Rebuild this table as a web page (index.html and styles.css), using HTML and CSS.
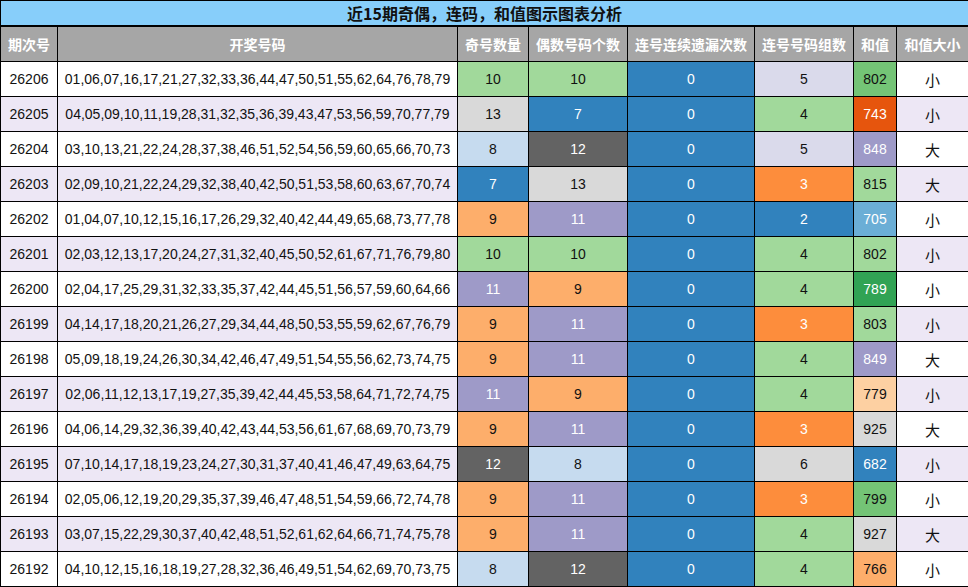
FILE: index.html
```html
<!DOCTYPE html>
<html lang="zh-CN">
<head>
<meta charset="utf-8">
<title>近15期奇偶，连码，和值图示图表分析</title>
<link rel="stylesheet" href="styles.css">
</head>
<body>
<table class="chart">
  <colgroup>
    <col class="w-period"><col class="w-nums"><col class="w-odd"><col class="w-even"><col class="w-miss"><col class="w-groups"><col class="w-sum"><col class="w-size">
  </colgroup>
  <thead>
    <tr class="title-row"><th colspan="8">近15期奇偶，连码，和值图示图表分析</th></tr>
    <tr class="head-row"><th>期次号</th><th>开奖号码</th><th>奇号数量</th><th>偶数号码个数</th><th>连号连续遗漏次数</th><th>连号号码组数</th><th>和值</th><th>和值大小</th></tr>
  </thead>
  <tbody>
    <tr><td>26206</td><td>01,06,07,16,17,21,27,32,33,36,44,47,50,51,55,62,64,76,78,79</td><td class="g3">10</td><td class="g3">10</td><td class="b1">0</td><td class="p4">5</td><td class="g2">802</td><td>小</td></tr>
    <tr class="alt"><td>26205</td><td>04,05,09,10,11,19,28,31,32,35,36,39,43,47,53,56,59,70,77,79</td><td class="k4">13</td><td class="b1">7</td><td class="b1">0</td><td class="g3">4</td><td class="o1">743</td><td>小</td></tr>
    <tr><td>26204</td><td>03,10,13,21,22,24,28,37,38,46,51,52,54,56,59,60,65,66,70,73</td><td class="b4">8</td><td class="k1">12</td><td class="b1">0</td><td class="p4">5</td><td class="p2">848</td><td>大</td></tr>
    <tr class="alt"><td>26203</td><td>02,09,10,21,22,24,29,32,38,40,42,50,51,53,58,60,63,67,70,74</td><td class="b1">7</td><td class="k4">13</td><td class="b1">0</td><td class="o2">3</td><td class="g3">815</td><td>大</td></tr>
    <tr><td>26202</td><td>01,04,07,10,12,15,16,17,26,29,32,40,42,44,49,65,68,73,77,78</td><td class="o3">9</td><td class="p2">11</td><td class="b1">0</td><td class="b1">2</td><td class="b2">705</td><td>小</td></tr>
    <tr class="alt"><td>26201</td><td>02,03,12,13,17,20,24,27,31,32,40,45,50,52,61,67,71,76,79,80</td><td class="g3">10</td><td class="g3">10</td><td class="b1">0</td><td class="g3">4</td><td class="g3">802</td><td>小</td></tr>
    <tr><td>26200</td><td>02,04,17,25,29,31,32,33,35,37,42,44,45,51,56,57,59,60,64,66</td><td class="p2">11</td><td class="o3">9</td><td class="b1">0</td><td class="g3">4</td><td class="g1">789</td><td>小</td></tr>
    <tr class="alt"><td>26199</td><td>04,14,17,18,20,21,26,27,29,34,44,48,50,53,55,59,62,67,76,79</td><td class="o3">9</td><td class="p2">11</td><td class="b1">0</td><td class="o2">3</td><td class="g3">803</td><td>小</td></tr>
    <tr><td>26198</td><td>05,09,18,19,24,26,30,34,42,46,47,49,51,54,55,56,62,73,74,75</td><td class="o3">9</td><td class="p2">11</td><td class="b1">0</td><td class="g3">4</td><td class="p2">849</td><td>大</td></tr>
    <tr class="alt"><td>26197</td><td>02,06,11,12,13,17,19,27,35,39,42,44,45,53,58,64,71,72,74,75</td><td class="p2">11</td><td class="o3">9</td><td class="b1">0</td><td class="g3">4</td><td class="o4">779</td><td>小</td></tr>
    <tr><td>26196</td><td>04,06,14,29,32,36,39,40,42,43,44,53,56,61,67,68,69,70,73,79</td><td class="o3">9</td><td class="p2">11</td><td class="b1">0</td><td class="o2">3</td><td class="k4">925</td><td>大</td></tr>
    <tr class="alt"><td>26195</td><td>07,10,14,17,18,19,23,24,27,30,31,37,40,41,46,47,49,63,64,75</td><td class="k1">12</td><td class="b4">8</td><td class="b1">0</td><td class="k4">6</td><td class="b1">682</td><td>小</td></tr>
    <tr><td>26194</td><td>02,05,06,12,19,20,29,35,37,39,46,47,48,51,54,59,66,72,74,78</td><td class="o3">9</td><td class="p2">11</td><td class="b1">0</td><td class="o2">3</td><td class="g2">799</td><td>小</td></tr>
    <tr class="alt"><td>26193</td><td>03,07,15,22,29,30,37,40,42,48,51,52,61,62,64,66,71,74,75,78</td><td class="o3">9</td><td class="p2">11</td><td class="b1">0</td><td class="g3">4</td><td class="k4">927</td><td>大</td></tr>
    <tr><td>26192</td><td>04,10,12,15,16,18,19,27,28,32,36,46,49,51,54,62,69,70,73,75</td><td class="b4">8</td><td class="k1">12</td><td class="b1">0</td><td class="g3">4</td><td class="o3">766</td><td>小</td></tr>
  </tbody>
</table>
</body>
</html>
```

FILE: styles.css
```css
html, body {
  margin: 0;
  padding: 0;
  background: #ffffff;
}

.chart {
  width: 968px;
  table-layout: fixed;
  border-collapse: collapse;
  font-family: "Liberation Sans", "Noto Sans CJK SC", sans-serif;
  font-size: 14px;
  color: #111111;
}

.w-period { width: 57px; }
.w-nums { width: 400px; }
.w-odd { width: 71px; }
.w-even { width: 99px; }
.w-miss { width: 127px; }
.w-groups { width: 99px; }
.w-sum { width: 43px; }
.w-size { width: 72px; }

.chart th,
.chart td {
  border: 1px solid #000000;
  padding: 0;
  text-align: center;
  vertical-align: middle;
  white-space: nowrap;
  overflow: hidden;
}

.title-row th {
  height: 24px;
  background: #87cefa;
  font-family: "Noto Sans CJK SC", sans-serif;
  font-size: 16px;
  font-weight: bold;
  color: #111111;
  border-bottom-width: 2px;
  line-height: 22px;
}

.head-row th {
  height: 34px;
  background: #a6a6a6;
  color: #ffffff;
  font-family: "Noto Sans CJK SC", sans-serif;
  font-size: 14px;
  font-weight: bold;
}

.chart tbody td {
  height: 34px;
  background: #ffffff;
}

.chart tbody tr.alt td {
  background: #ede7f5;
}

.chart tbody td:last-child {
  font-family: "Noto Sans CJK SC", sans-serif;
  font-size: 15px;
}

/* palette cells */
.chart tbody td.b1, .chart tbody tr.alt td.b1 { background: #3182bd; color: #ffffff; }
.chart tbody td.b2, .chart tbody tr.alt td.b2 { background: #6baed6; color: #ffffff; }
.chart tbody td.b4, .chart tbody tr.alt td.b4 { background: #c6dbef; color: #111111; }
.chart tbody td.o1, .chart tbody tr.alt td.o1 { background: #e6550d; color: #ffffff; }
.chart tbody td.o2, .chart tbody tr.alt td.o2 { background: #fd8d3c; color: #ffffff; }
.chart tbody td.o3, .chart tbody tr.alt td.o3 { background: #fdae6b; color: #111111; }
.chart tbody td.o4, .chart tbody tr.alt td.o4 { background: #fdd0a2; color: #111111; }
.chart tbody td.g1, .chart tbody tr.alt td.g1 { background: #31a354; color: #ffffff; }
.chart tbody td.g2, .chart tbody tr.alt td.g2 { background: #74c476; color: #111111; }
.chart tbody td.g3, .chart tbody tr.alt td.g3 { background: #a1d99b; color: #111111; }
.chart tbody td.p2, .chart tbody tr.alt td.p2 { background: #9e9ac8; color: #ffffff; }
.chart tbody td.p4, .chart tbody tr.alt td.p4 { background: #dadaeb; color: #111111; }
.chart tbody td.k1, .chart tbody tr.alt td.k1 { background: #636363; color: #ffffff; }
.chart tbody td.k4, .chart tbody tr.alt td.k4 { background: #d9d9d9; color: #111111; }
```
